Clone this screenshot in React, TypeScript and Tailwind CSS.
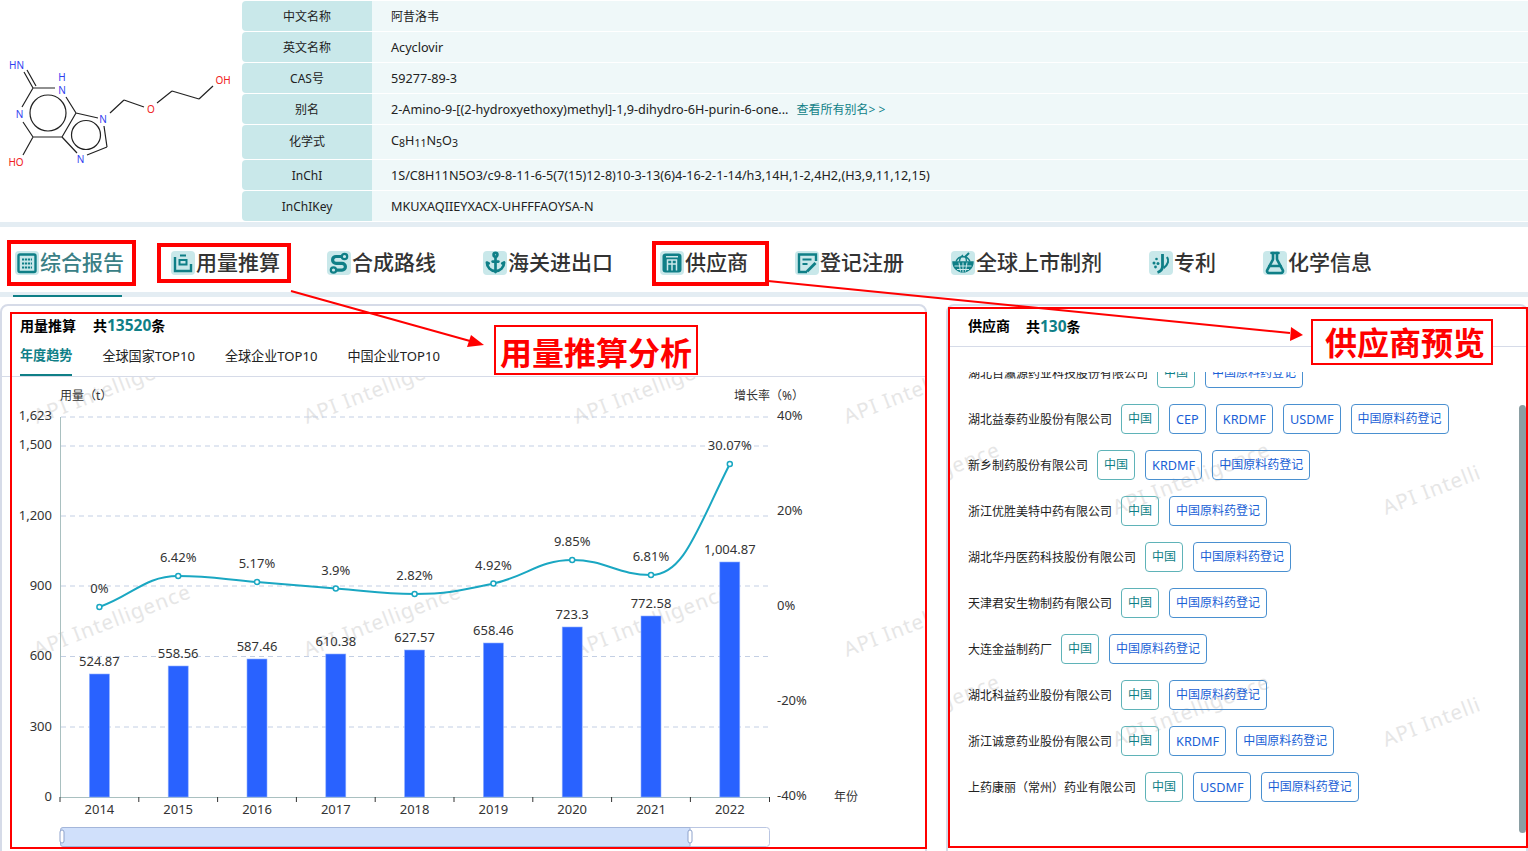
import { Anchor, FlaskConical } from "lucide-react"
import type { ReactNode } from "react"

const teal = "#0f7f87"

const infoRows: { label: string; value: ReactNode; tall?: boolean; latin?: boolean }[] = [
  { label: "中文名称", value: "阿昔洛韦" },
  { label: "英文名称", value: "Acyclovir", latin: true },
  { label: "CAS号", value: "59277-89-3", latin: true },
  {
    label: "别名",
    latin: true,
    value: (
      <>
        2-Amino-9-[(2-hydroxyethoxy)methyl]-1,9-dihydro-6H-purin-6-one...
        <span className="ml-2 text-xs text-[#0f7f87]">查看所有别名&gt; &gt;</span>
      </>
    ),
  },
  {
    label: "化学式",
    tall: true,
    latin: true,
    value: (
      <>
        C<sub className="text-[10.5px]">8</sub>H<sub className="text-[10.5px]">11</sub>N
        <sub className="text-[10.5px]">5</sub>O<sub className="text-[10.5px]">3</sub>
      </>
    ),
  },
  { label: "InChI", latin: true, value: "1S/C8H11N5O3/c9-8-11-6-5(7(15)12-8)10-3-13(6)4-16-2-1-14/h3,14H,1-2,4H2,(H3,9,11,12,15)" },
  { label: "InChIKey", latin: true, value: "MKUXAQIIEYXACX-UHFFFAOYSA-N" },
]

const tabIconProps = { width: 24, height: 24, viewBox: "0 0 24 24", fill: "none", stroke: teal, strokeWidth: 2.4 }

const ReportIcon = () => (
  <svg {...tabIconProps}>
    <rect x="3.5" y="3.5" width="17" height="17.5" rx="1.5" />
    <path d="M7 8.500h10M7 12.500h10M7 16.500h10" strokeWidth="1.8" strokeDasharray="2.2 0.8" />
  </svg>
)
const UsageIcon = () => (
  <svg {...tabIconProps}>
    <path d="M4 6v14h16v-7" />
    <path d="M9 4.500h6M8.500 9h7v4.500h-7z" strokeWidth="2" />
  </svg>
)
const RouteIcon = () => (
  <svg {...tabIconProps} strokeWidth="3.2">
    <path d="M14 5.500H9a3.400 3.400 0 0 0 0 6.800h6a3.400 3.400 0 0 1 0 6.800H10" />
    <circle cx="17.5" cy="5.5" r="2.7" strokeWidth="2.2" />
    <circle cx="6.5" cy="19" r="2.7" strokeWidth="2.2" />
  </svg>
)
const SupplierIcon = () => (
  <svg {...tabIconProps}>
    <rect x="2.5" y="2.5" width="19" height="19" rx="3" fill={teal} stroke="none" />
    <path d="M7.500 19.500V9h9v10.500M7.500 13h9M12 9v10.500M6 5.800h12" stroke="#c9e8ea" strokeWidth="1.5" />
  </svg>
)
const RegisterIcon = () => (
  <svg {...tabIconProps}>
    <path d="M12 21H4V3.500h17V10" />
    <path d="M7.500 8.500h9M7.500 13h5" strokeWidth="2" />
    <path d="M12 20.500l8.500-8.500" strokeWidth="2.8" />
  </svg>
)
const GlobeIcon = () => (
  <svg {...tabIconProps} strokeWidth="1.4">
    <path d="M2 11h20a10 10 0 0 1-20 0z" fill={teal} />
    <path d="M8 11.500l1.500 9M16 11.500l-1.500 9M12 11.500v10M3.500 15h17M6 18.500h12" stroke="#c9e8ea" strokeWidth="1" />
    <path d="M5 10.500a7.500 7.500 0 0 1 14 0M8.500 10.500c0-3 1.500-5 3.500-6.500M15.500 10.500c0-2-.5-4-1.500-5.500" />
    <path d="M14 6l4-4" strokeWidth="2" />
  </svg>
)
const PatentIcon = () => (
  <svg {...tabIconProps} strokeWidth="2.8">
    <path d="M13.500 3v12c0 3-2 5.500-5 6.500" />
    <path d="M18 6c2 3 1.500 7.500-3.500 11" strokeWidth="2.2" />
    <circle cx="7.5" cy="8" r="1.3" fill={teal} stroke="none" />
    <circle cx="5" cy="12" r="1.5" fill={teal} stroke="none" />
    <circle cx="9" cy="12.5" r="1.5" fill={teal} stroke="none" />
    <circle cx="6.5" cy="16" r="1.4" fill={teal} stroke="none" />
  </svg>
)

const tabs: { label: string; icon: ReactNode; active?: boolean }[] = [
  { label: "综合报告", icon: <ReportIcon />, active: true },
  { label: "用量推算", icon: <UsageIcon /> },
  { label: "合成路线", icon: <RouteIcon /> },
  { label: "海关进出口", icon: <Anchor size={23} color={teal} strokeWidth={2.8} /> },
  { label: "供应商", icon: <SupplierIcon /> },
  { label: "登记注册", icon: <RegisterIcon /> },
  { label: "全球上市制剂", icon: <GlobeIcon /> },
  { label: "专利", icon: <PatentIcon /> },
  { label: "化学信息", icon: <FlaskConical size={24} color={teal} strokeWidth={2.6} /> },
]

const suppliers = [
  { name: "湖北百瀛源药业科技股份有限公司", tags: ["中国", "中国原料药登记"] },
  { name: "湖北益泰药业股份有限公司", tags: ["中国", "CEP", "KRDMF", "USDMF", "中国原料药登记"] },
  { name: "新乡制药股份有限公司", tags: ["中国", "KRDMF", "中国原料药登记"] },
  { name: "浙江优胜美特中药有限公司", tags: ["中国", "中国原料药登记"] },
  { name: "湖北华丹医药科技股份有限公司", tags: ["中国", "中国原料药登记"] },
  { name: "天津君安生物制药有限公司", tags: ["中国", "中国原料药登记"] },
  { name: "大连金益制药厂", tags: ["中国", "中国原料药登记"] },
  { name: "湖北科益药业股份有限公司", tags: ["中国", "中国原料药登记"] },
  { name: "浙江诚意药业股份有限公司", tags: ["中国", "KRDMF", "中国原料药登记"] },
  { name: "上药康丽（常州）药业有限公司", tags: ["中国", "USDMF", "中国原料药登记"] },
]

const years = [
  { year: 2014, x: 99.4, top: 674, amount: "524.87", rate: "0%", ly: 607 },
  { year: 2015, x: 178.2, top: 666, amount: "558.56", rate: "6.42%", ly: 576 },
  { year: 2016, x: 257, top: 659, amount: "587.46", rate: "5.17%", ly: 582 },
  { year: 2017, x: 335.8, top: 654, amount: "610.38", rate: "3.9%", ly: 588.5 },
  { year: 2018, x: 414.6, top: 650, amount: "627.57", rate: "2.82%", ly: 594 },
  { year: 2019, x: 493.4, top: 643, amount: "658.46", rate: "4.92%", ly: 583.5 },
  { year: 2020, x: 572.2, top: 627, amount: "723.3", rate: "9.85%", ly: 560 },
  { year: 2021, x: 651, top: 616, amount: "772.58", rate: "6.81%", ly: 575 },
  { year: 2022, x: 729.8, top: 562, amount: "1,004.87", rate: "30.07%", ly: 464 },
]

const leftTicks = [
  ["1,623", 417, 415],
  ["1,500", 446, 444.5],
  ["1,200", 516, 515],
  ["900", 586, 585],
  ["600", 656.5, 655.5],
  ["300", 727, 726],
  ["0", 797, 796],
] as const

const rightTicks = [
  ["40%", 415],
  ["20%", 510],
  ["0%", 605],
  ["-20%", 700],
  ["-40%", 795],
] as const

const Watermark = ({ x, y }: { x: number; y: number }) => (
  <text x={x} y={y} transform={`rotate(-21 ${x} ${y})`} fontSize="20.5" letterSpacing="1" fill="#e6e6e6">
    API Intelligence
  </text>
)

function Molecule() {
  const bonds =
    "M33 88H55M66 97L76 113M76 113L98 118M62 137L76 113M33 137H62M33 137L23 122M22 107L33 88M62 137L77 153M87 155L107 147M107 147L104 126M110 113L124 100M124 100L144 107M157 103L172 91M172 91L199 99M199 99L213 86M33 137L23 155M33 88L24 72M36 86L27 70"
  return (
    <svg width="242" height="222" viewBox="0 0 242 222" className="shrink-0">
      <path d={bonds} stroke="#222" strokeWidth="1.2" fill="none" />
      <circle cx="48" cy="113" r="18" stroke="#222" strokeWidth="1.2" fill="none" />
      <circle cx="86" cy="135" r="14.5" stroke="#222" strokeWidth="1.2" fill="none" />
      <g fontSize="10" textAnchor="middle" fill="#3040f0">
        <text x="16.5" y="69">HN</text>
        <text x="62" y="81">H</text>
        <text x="62" y="93.5">N</text>
        <text x="19.5" y="118">N</text>
        <text x="103" y="123">N</text>
        <text x="80.5" y="163">N</text>
      </g>
      <g fontSize="10" textAnchor="middle" fill="#f02020">
        <text x="151" y="113">O</text>
        <text x="223" y="84">OH</text>
        <text x="16" y="166">HO</text>
      </g>
    </svg>
  )
}

function UsageChart() {
  const ys = years.map((p) => p.ly)
  // flat tangent at each local peak or dip, so the curve never overshoots a point
  const slopes = ys.map((y, i) => {
    if (i === 0) return (ys[1] - y) * 0.9
    if (i === ys.length - 1) return (y - ys[i - 1]) * 1.4
    const isExtreme = (y - ys[i - 1]) * (ys[i + 1] - y) <= 0
    return isExtreme ? 0 : (ys[i + 1] - ys[i - 1]) / 2
  })
  let line = `M${years[0].x} ${ys[0]}`
  for (let i = 0; i < ys.length - 1; i++) {
    line += `C${years[i].x + 33} ${ys[i] + slopes[i] * 0.42} ${years[i + 1].x - 33} ${ys[i + 1] - slopes[i + 1] * 0.42} ${years[i + 1].x} ${ys[i + 1]}`
  }

  return (
    <svg width="924" height="470" viewBox="2 377 924 470" className="block">
      {[37, 307, 577, 847].map((x) => (
        <g key={x}>
          <Watermark x={x} y={424} />
          <Watermark x={x} y={657} />
        </g>
      ))}

      {leftTicks.slice(0, -1).map(([label, y]) => (
        <line key={label} x1="61" x2="770" y1={y} y2={y} stroke="#c3cfe4" strokeDasharray="5 4" />
      ))}
      <path d="M60.5 417V797.5H770" stroke="#a9c0c0" fill="none" />
      {years.map((p) => (
        <line key={p.year} x1={p.x - 39.4} x2={p.x - 39.4} y1="797" y2="802" stroke="#333" />
      ))}
      <line x1="769.5" x2="769.5" y1="797" y2="802" stroke="#333" />

      <g fontSize="13" fill="#333">
        {leftTicks.map(([label, , textY]) => (
          <text key={label} x="52" y={textY + 4.5} textAnchor="end">
            {label}
          </text>
        ))}
        {rightTicks.map(([label, y]) => (
          <text key={label} x="777" y={y + 4.5}>
            {label}
          </text>
        ))}
        <text x="60" y="400" fontSize="12">用量（t）</text>
        <text x="734" y="400" fontSize="12">增长率（%）</text>
        <text x="834" y="801" fontSize="12">年份</text>
      </g>

      {years.map((p) => (
        <rect key={p.year} x={p.x - 10} y={p.top} width="20" height={797 - p.top} fill="#2962ff" stroke="#8fb0ff" strokeWidth="0.6" />
      ))}

      <path d={line} fill="none" stroke="#1aa7c2" strokeWidth="2" />
      {years.map((p) => (
        <circle key={p.year} cx={p.x} cy={p.ly} r="2.5" fill="#fff" stroke="#1aa7c2" strokeWidth="1.5" />
      ))}

      <g fontSize="13" fill="#333" textAnchor="middle">
        {years.map((p) => (
          <g key={p.year}>
            <text x={p.x} y={p.top - 8}>{p.amount}</text>
            <text x={p.x} y={p.ly - 14}>{p.rate}</text>
            <text x={p.x} y="814">{p.year}</text>
          </g>
        ))}
      </g>

      <rect x="60.5" y="827.5" width="709" height="19" rx="3" fill="#fff" stroke="#bac6e2" />
      <path d="M63 827.5H690V846.5H63a2.5 2.5 0 0 1-2.5-2.5V830a2.5 2.5 0 0 1 2.5-2.5z" fill="#d0e0fb" stroke="#a4b6da" />
      <rect x="60" y="830" width="4" height="13" rx="2" fill="#fff" stroke="#8ea3cc" />
      <rect x="688" y="830" width="4" height="13" rx="2" fill="#fff" stroke="#8ea3cc" />
    </svg>
  )
}

function SupplierTag({ text }: { text: string }) {
  if (text === "中国") {
    return <span className="flex h-[30px] items-center rounded-[4px] border border-[#5fb3b8] px-[6px] text-[#0f7f87]">{text}</span>
  }
  const isLatin = /^[A-Z]+$/.test(text)
  return (
    <span
      className={
        isLatin
          ? "flex h-[30px] items-center rounded-[4px] border border-[#4a90d0] px-[6px] text-[12.7px] text-[#1a5fd6]"
          : "flex h-[30px] items-center rounded-[4px] border border-[#4a90d0] px-[6px] text-[#1a5fd6]"
      }
    >
      {text}
    </span>
  )
}

function Annotation({ className, children }: { className: string; children?: ReactNode }) {
  return <div className={`absolute border-[#ff0000] ${className}`}>{children}</div>
}

export default function App() {
  return (
    <div className="relative h-[851px] w-[1528px] overflow-hidden bg-white font-['Noto_Sans','Noto_Sans_CJK_SC',sans-serif] text-[#222]">
      <section className="flex h-[222px]">
        <Molecule />
        <div className="flex flex-1 flex-col gap-px pt-px text-xs">
          {infoRows.map((row) => (
            <div key={row.label} className={row.tall ? "flex h-[34px]" : "flex h-[30px]"}>
              <div className={row.tall ? "flex w-[130px] items-center justify-center rounded-l bg-[#c9e8ea]" : "flex w-[130px] items-center justify-center rounded-l bg-[#c9e8ea] pt-[2px]"}>
                {row.label}
              </div>
              {row.tall ? (
                <div className="flex flex-1 items-center bg-[#eff8f9] pb-[4px] pl-[19px]">
                  <span className="text-[12.65px]">{row.value}</span>
                </div>
              ) : (
                <div className={row.latin ? "flex flex-1 items-center bg-[#eff8f9] pl-[19px]" : "flex flex-1 items-center bg-[#eff8f9] pl-[19px] pt-[2px]"}>
                  <span className={row.latin ? "text-[12.65px]" : ""}>{row.value}</span>
                </div>
              )}
            </div>
          ))}
        </div>
      </section>

      <div className="h-[5px] bg-[#e4edf3]" />

      <nav className="flex h-[65px] items-center gap-[47px] pl-[15px] pt-[6px]">
        {tabs.map((tab) => (
          <div
            key={tab.label}
            className={tab.active ? "flex items-center gap-px text-[21px] font-medium text-[#3a7f86]" : "flex items-center gap-px text-[21px] font-medium text-[#333]"}
          >
            <span className="flex size-6 items-center justify-center rounded bg-[#c9e8ea]">{tab.icon}</span>
            {tab.label}
          </div>
        ))}
      </nav>

      <div className="relative h-[5px] bg-[#e4edf3]">
        <div className="absolute bottom-0 left-[13px] h-[2px] w-[109px] bg-[#0f7f87]" />
      </div>

      <main className="mt-[7px] flex h-[560px] gap-[19px]">
        <section className="h-full w-[927px] rounded-lg border-2 border-[#d6dbe8]">
          <div className="flex h-[30px] items-end gap-[17px] pl-[18px] text-sm font-bold text-black">
            <span>用量推算</span>
            <span>
              共<span className="text-[15.5px] text-[#0f7f87]">13520</span>条
            </span>
          </div>
          <div className="flex h-[41px] gap-[30px] border-b border-[#d6dbe8] pl-[18px] text-[13.1px]">
            <div className="flex h-[40px] items-center border-b-2 border-[#0f7f87] pt-px font-bold text-[#0f7f87]">年度趋势</div>
            <div className="flex h-[40px] items-center pt-px">全球国家TOP10</div>
            <div className="flex h-[40px] items-center pt-px">全球企业TOP10</div>
            <div className="flex h-[40px] items-center pt-px">中国企业TOP10</div>
          </div>
          <UsageChart />
        </section>

        <section className="relative h-full flex-1 rounded-lg border-2 border-[#d6dbe8]">
          <div className="flex h-[41px] items-center gap-[16px] border-b border-[#d6dbe8] pl-[20px] text-sm font-bold text-black">
            <span>供应商</span>
            <span>
              共<span className="text-[15.5px] text-[#0f7f87]">130</span>条
            </span>
          </div>
          <div className="relative mt-[25px] h-[465px] overflow-hidden pl-[20px] text-xs">
            <svg width="532" height="465" viewBox="948 373 532 465" className="absolute left-0 top-0">
              {[846, 1116, 1386].map((x) => (
                <g key={x}>
                  <Watermark x={x} y={516} />
                  <Watermark x={x} y={748} />
                </g>
              ))}
            </svg>
            <div className="relative -mt-[14px] flex flex-col gap-4">
              {suppliers.map((s) => (
                <div key={s.name} className="flex h-[30px] items-center gap-[10px]">
                  <span className="mr-[-1px] pt-px">{s.name}</span>
                  {s.tags.map((t) => (
                    <SupplierTag key={t} text={t} />
                  ))}
                </div>
              ))}
            </div>
          </div>
          <div className="absolute right-0 top-[99px] h-[428px] w-[7px] rounded-full bg-[#8a9ea3]" />
        </section>
      </main>

      {/* red review marks drawn over the screenshot */}
      <Annotation className="left-[7px] top-[240px] h-[46px] w-[129px] border-[4px]" />
      <Annotation className="left-[157px] top-[243px] h-[40px] w-[134px] border-[4px]" />
      <Annotation className="left-[652px] top-[241px] h-[45px] w-[117px] border-[4px]" />
      <Annotation className="left-[10px] top-[312px] h-[537px] w-[917px] border-2" />
      <Annotation className="left-[948px] top-[307px] h-[541px] w-[580px] border-2" />
      <Annotation className="left-[494px] top-[325px] flex h-[50px] w-[204px] items-center justify-center border-2 bg-white pt-[6px] text-[32px] font-bold text-[#ff0000]">
        用量推算分析
      </Annotation>
      <Annotation className="left-[1311px] top-[319px] flex h-[46px] w-[182px] items-center justify-center border-2 bg-white pl-[6px] pt-[2px] text-[32px] font-bold text-[#ff0000]">
        供应商预览
      </Annotation>
      <svg width="1528" height="851" className="pointer-events-none absolute left-0 top-0">
        <path d="M291 291L470 341" stroke="#ff0000" strokeWidth="2" />
        <path d="M484 345L467 347L471 335Z" fill="#ff0000" />
        <path d="M768 281L1290 333" stroke="#ff0000" strokeWidth="2" />
        <path d="M1303 335L1290 341L1291 327Z" fill="#ff0000" />
      </svg>
    </div>
  )
}
